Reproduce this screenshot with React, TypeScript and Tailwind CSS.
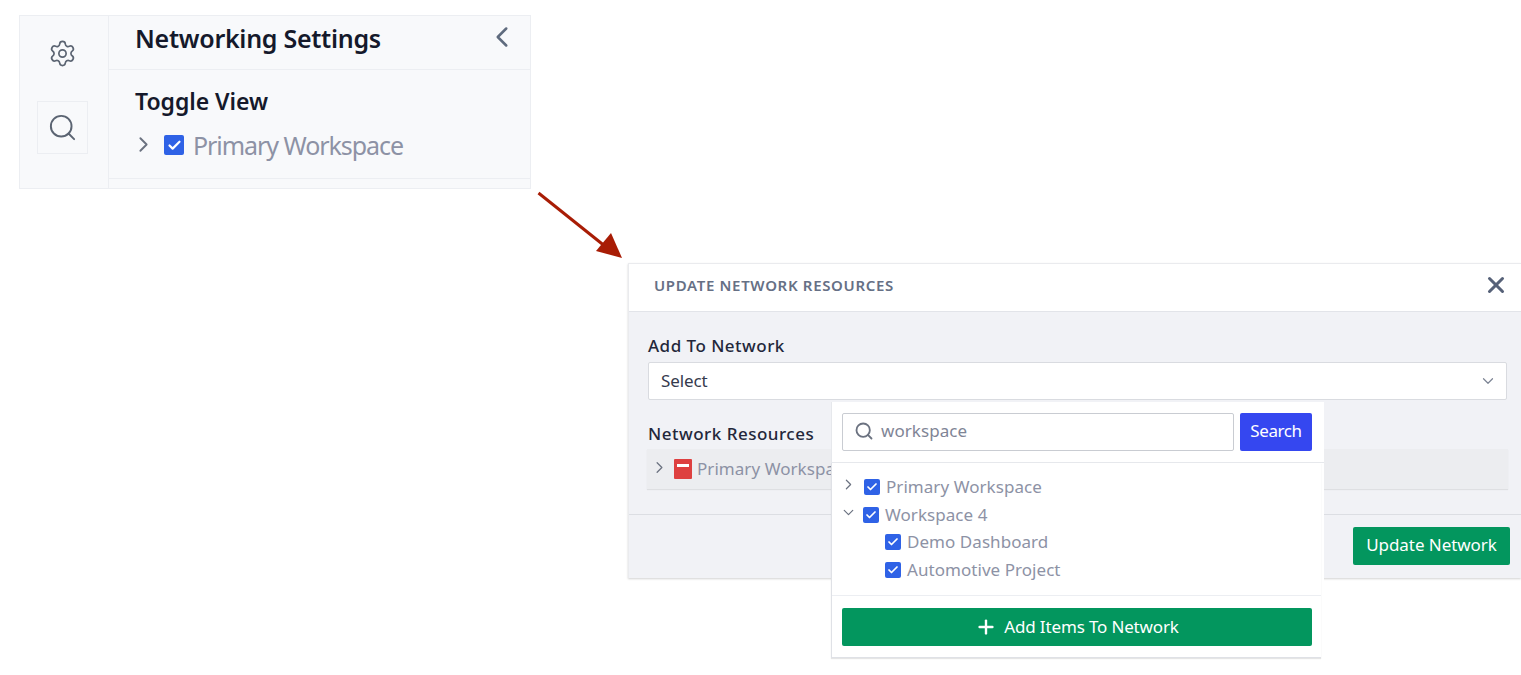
import React from 'react';
import { Check, ChevronDown, ChevronLeft, ChevronRight, Plus, Search, Settings, X } from 'lucide-react';

const font = { fontFamily: '"Noto Sans", "Liberation Sans", sans-serif' };

const CheckBox = ({ size = 'h-4 w-4' }: { size?: string }) => (
  <span className={`flex ${size} shrink-0 items-center justify-center rounded-[2px] bg-[#2f62e6]`}>
    <Check className="h-3 w-3 text-white" strokeWidth={3.5} />
  </span>
);

const TreeRow = ({ label, expanded, child }: { label: string; expanded?: boolean; child?: boolean }) => (
  <div className={`flex h-[27.7px] items-center ${child ? 'pl-[43px]' : ''}`}>
    {!child &&
      (expanded ? (
        <ChevronDown className="-ml-[2px] mr-[6px] h-[17px] w-[17px] -translate-y-[2px] text-[#6b7280]" strokeWidth={1.7} />
      ) : (
        <ChevronRight className="-ml-[2px] mr-[7px] h-[17px] w-[17px] -translate-y-[2px] text-[#6b7280]" strokeWidth={1.7} />
      ))}
    <CheckBox />
    <span className="ml-[6px] text-[17px] tracking-[0.05px] text-[#8d92a5]">{label}</span>
  </div>
);

const SettingsPanel = () => (
  <div className="flex h-[174px] w-[512px] border border-[#eceef2] bg-[#f8f9fb]">
    <div className="flex w-[89px] shrink-0 flex-col items-center border-r border-[#eceef2] pr-[4px] pt-[23px]">
      <Settings className="h-[29px] w-[29px] text-[#5b6472]" strokeWidth={1.4} />
      <div className="mt-[33px] flex h-[53px] w-[51px] items-center justify-center border border-[#eceef2]">
        <Search className="h-[31px] w-[31px] text-[#5b6472]" strokeWidth={1.5} />
      </div>
    </div>
    <div className="flex-1">
      <div className="flex h-[54px] items-start justify-between border-b border-[#eceef2] pl-[26px] pr-[11px] pt-[3px]">
        <h2 className="text-[25px] font-semibold leading-[38px] tracking-[-0.28px] text-[#15192b]">Networking Settings</h2>
        <ChevronLeft className="mt-[1px] h-[34px] w-[34px] text-[#5f6b7e]" strokeWidth={1.8} />
      </div>
      <div className="h-[109px] border-b border-[#eceef2] pl-[26px] pt-[14px]">
        <h3 className="text-[23px] font-semibold leading-[34px] tracking-[-0.05px] text-[#15192b]">Toggle View</h3>
        <div className="mt-[10px] flex items-center">
          <ChevronRight className="-ml-[4px] h-[25px] w-[25px] -translate-y-[1px] text-[#6b7280]" strokeWidth={1.8} />
          <span className="ml-[8px] flex h-[20px] w-[20px] items-center justify-center rounded-[2px] bg-[#2f62e6]">
            <Check className="h-[15px] w-[15px] text-white" strokeWidth={3.5} />
          </span>
          <span className="ml-[9px] text-[25px] leading-[34px] tracking-[-1.05px] text-[#8d92a5]">Primary Workspace</span>
        </div>
      </div>
    </div>
  </div>
);

const ResourceDropdown = () => (
  <div className="absolute left-[202px] top-[138px] w-[493px] bg-white">
    <div className="flex h-[61px] gap-[6px] border-b border-l border-[#e6e8ec] pl-[10px] pr-[12px] pt-[11px]">
      <div className="flex h-[38px] w-[392px] items-center rounded-[2px] border border-[#c9ccd2] pl-[11px]">
        <Search className="h-[20px] w-[20px] -translate-y-[1px] text-[#6b7280]" strokeWidth={2.2} />
        <span className="ml-[7px] -translate-y-[1px] text-[17px] tracking-[0.05px] text-[#7f8596]">workspace</span>
      </div>
      <button className="h-[38px] w-[72px] rounded-[2px] bg-[#3547f0] pb-[2px] text-[17px] tracking-[-0.4px] text-white">Search</button>
    </div>
    <div className="mr-[3px] border-b border-l border-[#dfe1e6] shadow-[0_1px_1px_rgba(0,0,0,0.1)]">
      <div className="h-[133px] border-b border-[#eceef2] pl-[10px] pt-[10px]">
        <TreeRow label="Primary Workspace" />
        <TreeRow label="Workspace 4" expanded />
        <TreeRow label="Demo Dashboard" child />
        <TreeRow label="Automotive Project" child />
      </div>
      <div className="h-[61px] pl-[10px] pt-[12px]">
        <button className="flex h-[38px] w-[470px] items-center justify-center rounded-[2px] bg-[#03965e] text-[17px] tracking-[-0.15px] text-white">
          <Plus className="mr-[7px] h-[22px] w-[22px]" strokeWidth={2.6} />
          Add Items To Network
        </button>
      </div>
    </div>
  </div>
);

const UpdateModal = () => (
  <div className="relative ml-[609px] mt-[74px] h-[315px] w-[893px] border-l border-t border-[#eaebee] bg-[#f1f2f6] shadow-[0_1px_2px_rgba(0,0,0,0.18)]">
    <div className="flex h-[48px] items-center justify-between border-b border-[#e2e4e9] bg-white pl-[25px] pr-[12px]">
      <span className="-translate-y-[2px] text-[15px] font-semibold tracking-[0.66px] text-[#667085]">UPDATE NETWORK RESOURCES</span>
      <X className="h-[26px] w-[26px] -translate-y-[3px] text-[#566178]" strokeWidth={2.8} />
    </div>
    <div className="h-[203px] border-b border-[#dcdee3] pl-[19px] pr-[14px] pt-[21px]">
      <label className="block text-[17px] font-medium leading-[26px] tracking-[0.48px] text-[#23273a]">Add To Network</label>
      <div className="mt-[3px] flex h-[38px] items-center justify-between rounded-[2px] border border-[#d9dbe0] bg-white pl-[12px] pr-[9px]">
        <span className="text-[17px] tracking-[-0.1px] text-[#353a4d]">Select</span>
        <ChevronDown className="h-[18px] w-[18px] text-[#7c8494]" strokeWidth={1.6} />
      </div>
      <label className="mt-[21px] block text-[17px] font-medium leading-[26px] tracking-[0.5px] text-[#23273a]">Network Resources</label>
      <div className="-ml-[1px] -mr-[1px] mt-[2px] flex h-[40px] items-center bg-[#ecedf0] pl-[3px] shadow-[0_1px_1px_rgba(0,0,0,0.08)]">
        <ChevronRight className="h-[19px] w-[19px] -translate-y-[2px] text-[#6b7280]" strokeWidth={1.6} />
        <span className="ml-[5px] flex h-[20px] w-[18px] items-center justify-center rounded-[1px] bg-[#de4040]">
          <span className="h-[3px] w-[12px] -translate-y-[4px] bg-white" />
        </span>
        <span className="ml-[5px] text-[17px] tracking-[0.05px] text-[#8d92a5]">Primary Workspace</span>
      </div>
    </div>
    <div className="flex justify-end pr-[11px] pt-[12px]">
      <button className="h-[38px] w-[157px] rounded-[2px] bg-[#03965e] pb-[2px] text-[17px] tracking-[-0.05px] text-white">Update Network</button>
    </div>
    <ResourceDropdown />
  </div>
);

export default function App() {
  return (
    <div className="relative h-[675px] w-[1521px] overflow-hidden bg-white pl-[19px] pt-[15px]" style={font}>
      <SettingsPanel />
      <svg className="absolute left-[530px] top-[185px]" width="100" height="80" viewBox="0 0 100 80">
        <path d="M8.5 8 L76 62" stroke="#a81c05" strokeWidth="3" fill="none" />
        <path d="M92 73 L66 66 L81 48 Z" fill="#a81c05" />
      </svg>
      <UpdateModal />
    </div>
  );
}
